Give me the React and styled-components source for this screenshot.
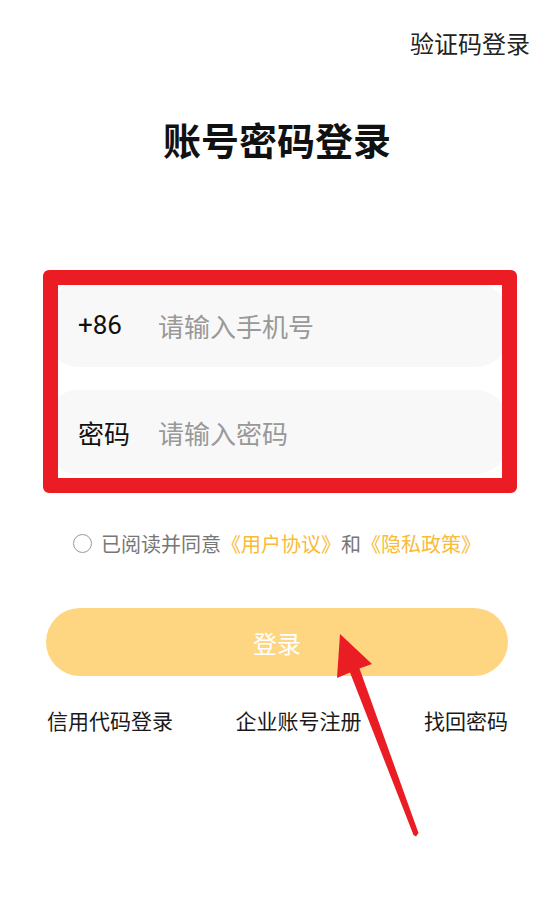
import React from "react";
import styled, { createGlobalStyle } from "styled-components";

const Global = createGlobalStyle`
  html, body { margin: 0; padding: 0; background: #fff; }
  body { font-family: Roboto, "Noto Sans CJK SC", sans-serif; color: #1a1a1a; }
`;

const Page = styled.div`
  position: relative;
  width: 554px;
  min-height: 923px;
  background: #fff;
  display: flex;
  flex-direction: column;
`;

const TopBar = styled.div`
  display: flex;
  justify-content: flex-end;
  padding: 30px 24px 0 0;
`;

const TopLink = styled.span`
  font-size: 24px;
  line-height: 30px;
  color: #222;
`;

const Title = styled.h1`
  margin: 58px 0 0;
  text-align: center;
  font-size: 38px;
  line-height: 48px;
  font-weight: 700;
  color: #111;
`;

const Form = styled.div`
  margin: 117px 46px 0;
  display: flex;
  flex-direction: column;
  gap: 23px;
`;

const Row = styled.div`
  height: 84px;
  border-radius: 32px;
  background: #f8f8f8;
  display: flex;
  align-items: center;
  padding-left: 32px;
`;

const Label = styled.span`
  width: 80px;
  font-size: 26px;
  color: #111;
`;

const Placeholder = styled.span`
  font-size: 26px;
  color: #999;
`;

const Agreement = styled.div`
  margin-top: 54px;
  padding-left: 73px;
  display: flex;
  align-items: center;
  height: 30px;
  font-size: 20px;
  color: #777;
`;

const Radio = styled.span`
  width: 17px;
  height: 17px;
  border: 1.6px solid #9a9a9a;
  border-radius: 50%;
  margin-right: 9px;
  flex: none;
`;

const Link = styled.span`
  color: #f8bb3a;
`;

const LoginButton = styled.button`
  margin: 50px 46px 0;
  height: 68px;
  border: none;
  border-radius: 34px;
  background: #fed682;
  color: #fff;
  font-family: inherit;
  font-size: 24px;
`;

const Links = styled.div`
  margin-top: 31px;
  padding: 0 46px 0 47px;
  display: flex;
  justify-content: space-between;
  font-size: 21px;
  line-height: 30px;
  color: #1a1a1a;
`;

const Annotation = styled.div`
  position: absolute;
  left: 43px;
  top: 270px;
  width: 474px;
  height: 223px;
  box-sizing: border-box;
  border: 15px solid #ec1c24;
  border-radius: 6px;
  pointer-events: none;
`;

const ArrowLayer = styled.svg`
  position: absolute;
  left: 0;
  top: 0;
  pointer-events: none;
`;

export default function App() {
  return (
    <>
      <Global />
      <Page>
        <TopBar>
          <TopLink>验证码登录</TopLink>
        </TopBar>
        <Title>账号密码登录</Title>
        <Form>
          <Row>
            <Label>+86</Label>
            <Placeholder>请输入手机号</Placeholder>
          </Row>
          <Row>
            <Label>密码</Label>
            <Placeholder>请输入密码</Placeholder>
          </Row>
        </Form>
        <Agreement>
          <Radio />
          已阅读并同意<Link>《用户协议》</Link>和<Link>《隐私政策》</Link>
        </Agreement>
        <LoginButton>登录</LoginButton>
        <Links>
          <span>信用代码登录</span>
          <span>企业账号注册</span>
          <span>找回密码</span>
        </Links>
        <Annotation />
        <ArrowLayer width="554" height="923" viewBox="0 0 554 923">
          <polygon
            points="340,634 372,664 359.5,668.5 418.5,833 416,836.5 413.5,835 350,672.5 337,678"
            fill="#ea1d25"
            strokeLinejoin="round"
          />
        </ArrowLayer>
      </Page>
    </>
  );
}
